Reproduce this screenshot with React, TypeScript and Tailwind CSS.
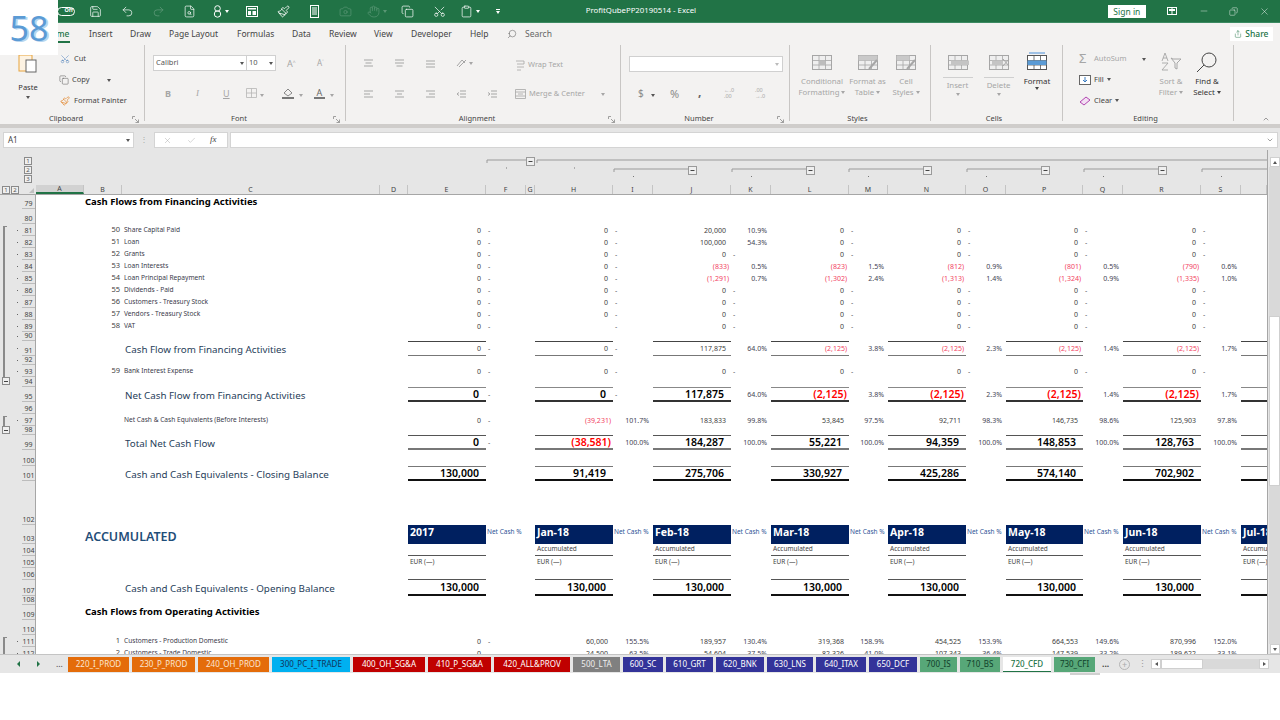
import React from "react";
import { Save, Undo2, Redo2, FileSearch, Paintbrush, Camera, Hand, Copy, Scissors, Clipboard, Search, ChevronUp, ChevronDown, Minus, X, Check, Share } from "lucide-react";

const COLS = "grid grid-cols-[48px_38px_258px_28px_78px_40px_9px_78px_40px_78px_40px_78px_39px_78px_40px_77px_40px_78px_40px_26px]";

type Rule = "none" | "thin" | "heavy" | "double" | "close" | "bottomThin" | "bottomHeavy";
const ruleClass: Record<Rule, string> = {
  none: "",
  thin: "border-t border-b border-t-[#444] border-b-[#777]",
  heavy: "border-t border-b-2 border-t-[#888] border-b-[#333]",
  double: "border-t border-b-2 border-t-[#555] border-b-[#777]",
  close: "border-t border-b-2 border-t-[#777] border-b-[#111]",
  bottomThin: "border-b border-b-[#555]",
  bottomHeavy: "border-b-2 border-b-[#111]",
};

type RowDef = {
  n: number;
  h: number;
  g?: "start" | "line" | "box";
  dot?: boolean;
  num?: string;
  label?: string;
  kind?: "small" | "big" | "title" | "tiny" | "accum";
  vals?: [string, string][];
  size?: "sm" | "lg";
  rule?: Rule;
  head?: "months" | "acc" | "eur";
};

const z: [string, string] = ["0", "-"];
const zeros = (): [string, string][] => [z, z, z, z, z, z, z];
const MONTHS = ["2017", "Jan-18", "Feb-18", "Mar-18", "Apr-18", "May-18", "Jun-18"];

const rows: RowDef[] = [
  { n: 79, h: 14, kind: "title", label: "Cash Flows from Financing Activities" },
  { n: 80, h: 15 },
  { n: 81, h: 12, g: "start", dot: true, num: "50", label: "Share Capital Paid", vals: [z, z, ["20,000", "10.9%"], z, z, z, z] },
  { n: 82, h: 12, g: "line", dot: true, num: "51", label: "Loan", vals: [z, z, ["100,000", "54.3%"], z, z, z, z] },
  { n: 83, h: 12, g: "line", dot: true, num: "52", label: "Grants", vals: zeros() },
  { n: 84, h: 12, g: "line", dot: true, num: "53", label: "Loan Interests", vals: [z, z, ["(833)", "0.5%"], ["(823)", "1.5%"], ["(812)", "0.9%"], ["(801)", "0.5%"], ["(790)", "0.6%"]] },
  { n: 85, h: 12, g: "line", dot: true, num: "54", label: "Loan Principal Repayment", vals: [z, z, ["(1,291)", "0.7%"], ["(1,302)", "2.4%"], ["(1,313)", "1.4%"], ["(1,324)", "0.9%"], ["(1,335)", "1.0%"]] },
  { n: 86, h: 12, g: "line", dot: true, num: "55", label: "Dividends - Paid", vals: zeros() },
  { n: 87, h: 12, g: "line", dot: true, num: "56", label: "Customers - Treasury Stock", vals: zeros() },
  { n: 88, h: 12, g: "line", dot: true, num: "57", label: "Vendors - Treasury Stock", vals: zeros() },
  { n: 89, h: 12, g: "line", dot: true, num: "58", label: "VAT", vals: [z, ["", "-"], z, z, z, z, z] },
  { n: 90, h: 9, g: "line", dot: true },
  { n: 91, h: 15, g: "line", dot: true, kind: "big", label: "Cash Flow from Financing Activities", rule: "thin", vals: [z, z, ["117,875", "64.0%"], ["(2,125)", "3.8%"], ["(2,125)", "2.3%"], ["(2,125)", "1.4%"], ["(2,125)", "1.7%"]] },
  { n: 92, h: 9, g: "line", dot: true },
  { n: 93, h: 12, g: "line", dot: true, num: "59", label: "Bank Interest Expense", kind: "tiny", vals: zeros() },
  { n: 94, h: 10, g: "box" },
  { n: 95, h: 15, kind: "big", label: "Net Cash Flow from Financing Activities", size: "lg", rule: "heavy", vals: [z, z, ["117,875", "64.0%"], ["(2,125)", "3.8%"], ["(2,125)", "2.3%"], ["(2,125)", "1.4%"], ["(2,125)", "1.7%"]] },
  { n: 96, h: 12 },
  { n: 97, h: 12, g: "start", dot: true, kind: "tiny", label: "Net Cash & Cash Equivalents (Before Interests)", vals: [z, ["(39,231)", "101.7%"], ["183,833", "99.8%"], ["53,845", "97.5%"], ["92,711", "98.3%"], ["146,735", "98.6%"], ["125,903", "97.8%"]] },
  { n: 98, h: 9, g: "box" },
  { n: 99, h: 15, kind: "big", label: "Total Net Cash Flow", size: "lg", rule: "double", vals: [z, ["(38,581)", "100.0%"], ["184,287", "100.0%"], ["55,221", "100.0%"], ["94,359", "100.0%"], ["148,853", "100.0%"], ["128,763", "100.0%"]] },
  { n: 100, h: 16 },
  { n: 101, h: 15, kind: "big", label: "Cash and Cash Equivalents - Closing Balance", size: "lg", rule: "close", vals: [["130,000", ""], ["91,419", ""], ["275,706", ""], ["330,927", ""], ["425,286", ""], ["574,140", ""], ["702,902", ""]] },
  { n: 102, h: 44 },
  { n: 103, h: 19, kind: "accum", label: "ACCUMULATED", head: "months" },
  { n: 104, h: 12, head: "acc" },
  { n: 105, h: 12, head: "eur" },
  { n: 106, h: 12, rule: "bottomThin", vals: [["", ""], ["", ""], ["", ""], ["", ""], ["", ""], ["", ""], ["", ""]] },
  { n: 107, h: 16, kind: "big", label: "Cash and Cash Equivalents - Opening Balance", size: "lg", rule: "bottomHeavy", vals: [["130,000", ""], ["130,000", ""], ["130,000", ""], ["130,000", ""], ["130,000", ""], ["130,000", ""], ["130,000", ""]] },
  { n: 108, h: 9 },
  { n: 109, h: 15, kind: "title", label: "Cash Flows from Operating Activities" },
  { n: 110, h: 15 },
  { n: 111, h: 12, g: "start", dot: true, num: "1", label: "Customers - Production Domestic", vals: [z, ["60,000", "155.5%"], ["189,957", "130.4%"], ["319,368", "158.9%"], ["454,525", "153.9%"], ["664,553", "149.6%"], ["870,996", "152.0%"]] },
  { n: 112, h: 12, g: "line", dot: true, num: "2", label: "Customers - Trade Domestic", vals: [z, ["24,500", "63.5%"], ["54,604", "37.5%"], ["82,326", "41.0%"], ["107,343", "36.4%"], ["147,539", "33.2%"], ["189,622", "33.1%"]] },
];

function Gutter({ r }: { r: RowDef }) {
  return (
    <div className="flex w-[36px] shrink-0 bg-[#e6e6e6] border-r border-[#a6a6a6]">
      <div className="w-[12px]">
        {r.g === "start" && <div className="mt-[2px] ml-[3px] w-[4px] h-[calc(100%-2px)] border-l-2 border-t border-[#8a8a8a]" />}
        {r.g === "line" && <div className="ml-[3px] h-full border-l-2 border-[#8a8a8a]" />}
        {r.g === "box" && (
          <div className="ml-[2px] w-[8px] h-[8px] border border-[#8a8a8a] bg-[#efefef] flex items-center justify-center">
            <div className="w-[4px] h-px bg-[#444]" />
          </div>
        )}
      </div>
      <div className="w-[10px] flex items-center justify-center">
        {r.dot && <div className="w-px h-px bg-[#666]" />}
      </div>
      <div className="w-[13px] border-b border-[#bcbcbc] flex items-end justify-center text-[7px] leading-[9px] text-[#444]">{r.n}</div>
    </div>
  );
}

function Val({ v, size, rule }: { v: string; size?: "sm" | "lg"; rule: Rule }) {
  const neg = v.startsWith("(");
  const lg = size === "lg";
  return (
    <div
      className={`flex items-center justify-end whitespace-nowrap ${ruleClass[rule]} ${lg ? "text-[10.5px] font-semibold leading-none" : "text-[7px] leading-none"} ${lg ? (neg ? "pr-[2px]" : "pr-[7px]") : neg ? "pr-[2px]" : "pr-[5px]"} ${neg ? (lg ? "text-[#ff0000]" : "text-[#f2435f]") : lg ? "text-black" : "text-[#404040]"}`}
    >
      {v}
    </div>
  );
}

function Pct({ p }: { p: string }) {
  if (p === "-") return <div className="flex items-center pl-[2px] text-[7px] leading-none text-[#555]">-</div>;
  return <div className="flex items-center justify-end pr-[4px] text-[7px] leading-none text-[#444454]">{p}</div>;
}

function DataCells({ r }: { r: RowDef }) {
  const rule = r.rule ?? "none";
  const out: React.ReactNode[] = [];
  (r.vals ?? []).forEach((pair, i) => {
    out.push(<Val key={`v${i}`} v={pair[0]} size={r.size} rule={rule} />);
    out.push(<Pct key={`p${i}`} p={pair[1]} />);
    if (i === 0) out.push(<div key="g" />);
  });
  if (r.vals) out.push(<div key="t" className={ruleClass[rule]} />);
  return <>{out}</>;
}

function MonthCells() {
  const out: React.ReactNode[] = [];
  MONTHS.forEach((m, i) => {
    out.push(<div key={`m${i}`} className="bg-[#002060] text-white text-[10.5px] font-bold flex items-start pl-[2px] pt-[1px] leading-[13px]">{m}</div>);
    out.push(<div key={`n${i}`} className="pl-px pt-[2px] text-[6.5px] leading-[9px] text-[#2f5597] whitespace-nowrap">Net Cash %</div>);
    if (i === 0) out.push(<div key="g" />);
  });
  out.push(<div key="t" className="bg-[#002060] text-white text-[10.5px] font-bold pl-[2px] pt-[1px] leading-[13px] overflow-hidden whitespace-nowrap">Jul-18</div>);
  return <>{out}</>;
}

function TextCells({ text, line }: { text?: string; line?: boolean }) {
  const out: React.ReactNode[] = [];
  const cell = (k: string, t?: string) => (
    <div key={k} className={`flex items-center pl-[2px] text-[6.5px] leading-none text-[#444] overflow-hidden whitespace-nowrap ${line ? "border-b border-[#555]" : ""}`}>{t}</div>
  );
  for (let i = 0; i < 7; i++) {
    out.push(cell(`c${i}`, i === 0 && line ? undefined : text));
    out.push(<div key={`e${i}`} />);
    if (i === 0) out.push(<div key="g" />);
  }
  out.push(cell("t", text));
  return <>{out}</>;
}

function SheetRow({ r }: { r: RowDef }) {
  const big = r.kind === "big";
  return (
    <div className="flex shrink-0" style={{ height: r.h }}>
      <Gutter r={r} />
      <div className={`${COLS} w-[1231px] bg-white`}>
        <div />
        {r.kind === "title" ? (
          <div className="col-span-2 flex items-center pl-[1px] text-[9.5px] font-bold text-black whitespace-nowrap">{r.label}</div>
        ) : r.kind === "accum" ? (
          <div className="col-span-2 flex items-center pl-[2px] pt-[3px] text-[12.5px] font-semibold text-[#1f4e79] border-b border-[#9dc3e6] -ml-px whitespace-nowrap">{r.label}</div>
        ) : (
          <>
            <div className="flex items-center justify-end pr-[2px] text-[7.5px] leading-none text-[#444]">{r.num}</div>
            <div className={`flex items-center whitespace-nowrap ${big ? "pl-[3px] pt-[2px] leading-none text-[9.8px] text-[#27405a]" : "pl-[2px] text-[6.6px] text-[#3a3a4a]"}`}>{r.label}</div>
          </>
        )}
        <div />
        {r.head === "months" && <MonthCells />}
        {r.head === "acc" && <TextCells text="Accumulated" line />}
        {r.head === "eur" && <TextCells text="EUR (—)" />}
        <DataCells r={r} />
      </div>
    </div>
  );
}

function OutlineBars() {
  const segs = [614, 732, 849, 967, 1084];
  const stroke = "#9a9a9a";
  return (
    <svg width={1231} height={35} viewBox="36 150 1231 35" className="block">
      <path d="M487 163V160H526M537 163V160H1267" fill="none" stroke={stroke} strokeWidth={1} />
      <rect x={526.5} y={157.5} width={8} height={8} fill="#efefef" stroke={stroke} />
      <path d="M528.5 161.5H532.5" stroke="#444" />
      <rect x={506} y={167.5} width={1} height={1} fill="#777" />
      <rect x={574} y={167.5} width={1} height={1} fill="#777" />
      {segs.map((s) => (
        <g key={s}>
          <path d={`M${s} 172V169H${s + 74}`} fill="none" stroke={stroke} />
          <rect x={s + 74.5} y={166.5} width={8} height={8} fill="#efefef" stroke={stroke} />
          <path d={`M${s + 76.5} 170.5H${s + 80.5}`} stroke="#444" />
          <rect x={s + 19} y={176} width={1} height={1} fill="#777" />
        </g>
      ))}
      <path d="M1202 172V169H1267" fill="none" stroke={stroke} />
      <rect x={1221} y={176} width={1} height={1} fill="#777" />
    </svg>
  );
}

function Lvl({ t }: { t: string }) {
  return <div className="w-[8px] h-[8px] border border-[#8a8a8a] bg-[#efefef] text-[6px] leading-[7px] text-center text-[#555]">{t}</div>;
}

function ColHeader() {
  const letters = "ABCDEFGHIJKLMNOPQRS".split("").concat("");
  return (
    <div className="flex h-[10px] shrink-0">
      <div className="w-[36px] flex items-center bg-[#e6e6e6] border-b border-[#a6a6a6] pl-[2px] gap-px">
        <Lvl t="1" />
        <Lvl t="2" />
        <div className="ml-[9px] mt-[2px] w-0 h-0 border-l-[5px] border-l-transparent border-b-[5px] border-b-[#c0c0c0]" />
      </div>
      <div className={`${COLS} w-[1231px] bg-[#e6e6e6] border-b border-[#a6a6a6]`}>
        {letters.map((l, i) => (
          <div key={i} className={`flex items-center justify-center text-[7px] leading-none text-[#444] border-r border-[#c4c4c4] ${i === 0 ? "bg-[#d2d2d2] border-b-2 border-b-[#217346]" : ""}`}>{l}</div>
        ))}
      </div>
    </div>
  );
}

function Caret({ c = "#555" }: { c?: string }) {
  return <span className="inline-block w-0 h-0 border-x-[2.5px] border-x-transparent border-t-[3px]" style={{ borderTopColor: c }} />;
}

function Launcher() {
  return (
    <svg width={7} height={7} viewBox="0 0 7 7" className="block">
      <path d="M.5 3V.5H3M6.5 6.5L3 3M6.5 3.5V6.5H3.5" fill="none" stroke="#8a8a8a" strokeWidth={0.8} />
    </svg>
  );
}

function Group({ w, label, children, launcher }: { w: string; label: string; children: React.ReactNode; launcher?: boolean }) {
  return (
    <div className={`${w} h-[76px] shrink-0 flex flex-col border-r border-[#c8c6c4]`}>
      <div className="flex-1 flex min-h-0">{children}</div>
      <div className="h-[4px] flex items-center pr-[5px]">
        <span className="flex-1 text-center text-[7.5px] leading-none text-[#444]">{label}</span>
        {launcher && <Launcher />}
      </div>
    </div>
  );
}

function GridIcon({ kind, dim = true }: { kind: "cf" | "table" | "cell" | "ins" | "del" | "fmt"; dim?: boolean }) {
  const c = dim ? "#a6a6a6" : "#555";
  return (
    <svg width={22} height={20} viewBox="0 0 22 20" className="block">
      <rect x={1.5} y={3.5} width={19} height={14} fill={dim ? "#efefef" : "#fff"} stroke={c} />
      <path d="M1.5 8.5H20.5M1.5 13H20.5M8 3.5V17.5M14.5 3.5V17.5" stroke={c} strokeWidth={0.8} />
      {kind === "cf" && <rect x={8} y={8.5} width={6.5} height={4.5} fill="#bdbdbd" />}
      {kind === "table" && <><rect x={1.5} y={3.5} width={19} height={5} fill="#c9c9c9" /><path d="M20 8l-8 9" stroke="#a6a6a6" strokeWidth={2} /></>}
      {kind === "cell" && <><rect x={1.5} y={3.5} width={13} height={5} fill="#c9c9c9" /><path d="M20 8l-8 9" stroke="#a6a6a6" strokeWidth={2} /></>}
      {kind === "ins" && <rect x={4} y={8.5} width={18} height={4.5} fill="#c4c4c4" />}
      {kind === "del" && <><rect x={4} y={8.5} width={11} height={4.5} fill="#c4c4c4" /><path d="M15 7l6 7M21 7l-6 7" stroke="#a6a6a6" /></>}
      {kind === "fmt" && <><rect x={1.5} y={8.5} width={19} height={4.5} fill="#5b9bd5" /><path d="M3 1H19" stroke="#4a90d9" /></>}
    </svg>
  );
}

function Lines({ kind }: { kind: number }) {
  const paths: Record<number, string> = {
    0: "M1 2H10M2.5 5H8.5M1 8H10",
    1: "M1 2H10M1 5H10M2.5 8H8.5",
    2: "M1 3H10M1 6H10M1 9H10",
    3: "M1 2H10M1 5H7M1 8H10",
    4: "M1 2H10M3 5H8M1 8H10",
    5: "M1 2H10M4 5H10M1 8H10",
    6: "M4 2H10M4 5H10M4 8H10M1 3.5L3 5L1 6.5",
    7: "M4 2H10M4 5H10M4 8H10M3 3.5L1 5L3 6.5",
  };
  return (
    <svg width={11} height={10} viewBox="0 0 11 10" className="block">
      <path d={paths[kind]} stroke="#9d9d9d" strokeWidth={0.9} fill="none" />
    </svg>
  );
}

function BigBtn({ w, icon, l1, l2, dim = true, cap = false }: { w: string; icon: React.ReactNode; l1: string; l2?: string; dim?: boolean; cap?: boolean }) {
  return (
    <div className={`${w} flex flex-col items-center pt-[7px] text-[7.8px] leading-[11px] ${dim ? "text-[#a6a6a6]" : "text-[#333]"}`}>
      <div className="h-[20px] flex items-center justify-center">{icon}</div>
      <div className="mt-[4px] whitespace-nowrap">{l1}</div>
      <div className="whitespace-nowrap flex items-center gap-[2px]">
        {l2}
        {cap && <Caret c={dim ? "#a6a6a6" : "#444"} />}
      </div>
    </div>
  );
}

function SplitBtn({ w, kind, label }: { w: string; kind: "ins" | "del"; label: string }) {
  return (
    <div className={`${w} flex flex-col items-center pt-[7px] text-[7.8px] leading-[11px] text-[#a6a6a6]`}>
      <div className="h-[20px] flex items-center justify-center"><GridIcon kind={kind} /></div>
      <div className="w-[30px] border-t border-[#cfcfcf] mt-[5px] pt-[2px] text-center">{label}</div>
      <div className="mt-[2px] flex justify-center"><Caret c="#a6a6a6" /></div>
    </div>
  );
}

const QA = "w-[31.2px] h-full flex items-center justify-center gap-[3px] shrink-0";

function TitleBar() {
  return (
    <div className="h-[23px] shrink-0 bg-[#217346] border-b border-[#3c8a62] flex items-center text-white">
      <div className="ml-[57px] w-[18px] h-[9px] rounded-full border border-white flex items-center justify-end pr-[1px] text-[5.5px] font-bold leading-none">Off</div>
      <div className="ml-[5.4px] flex h-full items-center">
        <div className={QA}><Save size={13} strokeWidth={1.3} /></div>
        <div className={QA}><Undo2 size={13} strokeWidth={1.3} /></div>
        <div className={`${QA} opacity-30`}><Redo2 size={13} strokeWidth={1.3} /></div>
        <div className={QA}><FileSearch size={13} strokeWidth={1.3} /></div>
        <div className={QA}>
          <svg width={9} height={13} viewBox="0 0 9 13"><circle cx={4.5} cy={3.5} r={2.8} fill="none" stroke="#fff" /><circle cx={4.5} cy={9} r={3.2} fill="none" stroke="#fff" /></svg>
          <Caret c="#fff" />
        </div>
        <div className={QA}>
          <svg width={12} height={11} viewBox="0 0 12 11"><rect x={.5} y={.5} width={11} height={10} fill="none" stroke="#fff" /><rect x={2} y={2} width={8} height={1.5} fill="#fff" /><rect x={2} y={5} width={3} height={4} fill="#fff" /><rect x={6.5} y={5} width={3.5} height={4} fill="#fff" /></svg>
        </div>
        <div className={QA}><Paintbrush size={13} strokeWidth={1.5} /></div>
        <div className={QA}>
          <svg width={9} height={13} viewBox="0 0 9 13"><rect x={.5} y={.5} width={8} height={12} fill="none" stroke="#fff" /><path d="M2 3H7M2 5H7M2 7H7M2 9H7" stroke="#fff" /></svg>
        </div>
        <div className={`${QA} opacity-25`}><Camera size={13} strokeWidth={1.3} /></div>
        <div className={`${QA} opacity-25`}><Hand size={13} strokeWidth={1.3} /><Caret c="#fff" /></div>
        <div className={QA}><Copy size={13} strokeWidth={1.3} /></div>
        <div className={QA}><Scissors size={13} strokeWidth={1.3} className="-rotate-90" /></div>
        <div className={QA}><Clipboard size={13} strokeWidth={1.3} /><Caret c="#fff" /></div>
        <div className="w-[24px] h-full flex flex-col items-center justify-center gap-px">
          <div className="w-[4px] h-px bg-white" />
          <Caret c="#fff" />
        </div>
      </div>
      <div className="ml-[76px] w-[125px] text-[7.8px] whitespace-nowrap">ProfitQubePP20190514 - Excel</div>
      <div className="ml-[397px] w-[38px] h-[13px] bg-white text-[#217346] text-[8.5px] leading-[13px] text-center">Sign in</div>
      <div className="ml-[20px] w-[12px] flex justify-center">
        <svg width={10} height={8} viewBox="0 0 10 8"><rect x={.5} y={.5} width={9} height={7} fill="none" stroke="#fff" /><path d="M5 .5V7.5" stroke="#fff" /><rect x={2} y={2} width={6} height={2} fill="#fff" /></svg>
      </div>
      <div className="ml-[20px] w-[12px] flex justify-center"><Minus size={10} strokeWidth={1} /></div>
      <div className="ml-[18px] w-[12px] flex justify-center"><Copy size={9} strokeWidth={1.2} className="-scale-x-100" /></div>
      <div className="ml-[19px] w-[12px] flex justify-center"><X size={11} strokeWidth={1} /></div>
    </div>
  );
}

function TabRow() {
  const tabs: [string, string][] = [
    ["Insert", "w-[41px]"], ["Draw", "w-[39px]"], ["Page Layout", "w-[68px]"], ["Formulas", "w-[55px]"],
    ["Data", "w-[37px]"], ["Review", "w-[45px]"], ["View", "w-[37px]"], ["Developer", "w-[59px]"], ["Help", "w-[37px]"],
  ];
  return (
    <div className="h-[22px] shrink-0 bg-[#f3f2f1] flex items-center text-[8.5px] text-[#444]">
      <div className="ml-[44px] w-[45px] h-full flex items-center">
        <span className="text-[#217346] border-b-2 border-[#217346] pt-[3px] pb-px leading-[12px] px-px font-medium">Home</span>
      </div>
      {tabs.map(([t, w]) => <div key={t} className={`${w} whitespace-nowrap`}>{t}</div>)}
      <Search size={10} strokeWidth={1.2} className="-scale-x-100 text-[#555]" />
      <div className="ml-[8px] text-[#666]">Search</div>
      <div className="ml-[678px] w-[43px] h-[14px] bg-white flex items-center justify-center gap-[3px] text-[#217346] text-[8.5px] font-medium">
        <Share size={8} strokeWidth={1.4} />Share
      </div>
    </div>
  );
}

function Ribbon() {
  const txt = "text-[7.5px] leading-none";
  return (
    <div className="h-[79px] shrink-0 bg-[#f3f2f1] flex items-start">
      <Group w="w-[145px]" label="Clipboard" launcher>
        <div className="w-[56px] flex flex-col items-center pt-[8px]">
          <svg width={20} height={20} viewBox="0 0 20 20"><rect x={1} y={2} width={13} height={16} fill="#fdf3e3" stroke="#e8a33d" /><rect x={8} y={7} width={10} height={12} fill="#fff" stroke="#666" /></svg>
          <div className={`${txt} text-[#333] mt-[11px]`}>Paste</div>
          <div className="mt-[4px] flex"><Caret /></div>
        </div>
        <div className="flex flex-col pt-[3px] pl-[3px]">
          <div className={`h-[21px] flex items-center gap-[4px] pl-[1px] ${txt} text-[#444]`}><Scissors size={10} strokeWidth={1.2} className="-rotate-90 text-[#4a7ebb]" />Cut</div>
          <div className={`h-[21px] flex items-center gap-[3px] ${txt} text-[#444]`}><Copy size={10} strokeWidth={1.2} className="text-[#555]" />Copy<span className="ml-[14px]"><Caret /></span></div>
          <div className={`h-[21px] flex items-center gap-[4px] pl-[1px] ${txt} text-[#444]`}><Paintbrush size={10} strokeWidth={1.5} className="text-[#e07b1a]" />Format Painter</div>
        </div>
      </Group>
      <Group w="w-[201px]" label="Font" launcher>
        <div className="pl-[8px] pt-[10px] flex flex-col">
          <div className="flex items-center">
            <div className={`w-[94px] h-[16px] bg-white border border-[#d0d0d0] flex items-center justify-between px-[2px] ${txt} text-[#555]`}>Calibri<Caret /></div>
            <div className={`w-[29px] h-[16px] bg-white border border-l-0 border-[#d0d0d0] flex items-center justify-between px-[2px] ${txt} text-[#555]`}>10<Caret /></div>
            <div className="ml-[11px] w-[30px] text-[9px] text-[#a6a6a6] leading-none">A<sup className="text-[5px]">^</sup></div>
            <div className="text-[8px] text-[#a6a6a6] leading-none">A<sup className="text-[5px]">˅</sup></div>
          </div>
          <div className="flex items-center h-[14px] mt-[15px] text-[9px] text-[#a6a6a6] leading-none">
            <div className="ml-[12px] w-[31px] font-bold">B</div>
            <div className="w-[27px] italic [font-family:'Liberation_Serif',serif]">I</div>
            <div className="w-[23px] underline">U</div>
            <div className="w-[10px]"><svg width={11} height={10} viewBox="0 0 11 10"><path d="M.5.5H10.5V9.5H.5ZM.5 5H10.5M5.5.5V9.5" fill="none" stroke="#b5b5b5" strokeWidth={0.8} /></svg></div>
            <div className="ml-[4px] w-[22px]"><Caret c="#a6a6a6" /></div>
            <svg width={12} height={11} viewBox="0 0 12 11"><path d="M6 1L10 5L6 8L2 5Z" fill="none" stroke="#888" /><rect y={9} width={12} height={2} fill="#777" /></svg>
            <div className="ml-[5px] w-[15px]"><Caret c="#a6a6a6" /></div>
            <div className="flex flex-col items-center text-[#666] text-[9px]"><span>A</span><div className="w-[11px] h-[2px] bg-[#777]" /></div>
            <div className="ml-[5px]"><Caret c="#a6a6a6" /></div>
          </div>
        </div>
      </Group>
      <Group w="w-[275px]" label="Alignment" launcher>
        <div className="pl-[17px] pt-[12px] flex flex-col">
          <div className="flex items-center h-[12px] gap-[20px]">
            <Lines kind={0} /><Lines kind={1} /><Lines kind={2} />
            <div className="flex items-center gap-[2px]"><svg width={11} height={10} viewBox="0 0 11 10"><path d="M1 8L6 2L9 5M3 9L10 2" stroke="#a6a6a6" fill="none" /></svg><Caret c="#a6a6a6" /></div>
            <div className="flex items-center gap-[3px] ml-[22px] mt-[4px] text-[7.5px] text-[#a6a6a6]">
              <svg width={10} height={11} viewBox="0 0 10 11"><path d="M1 1H9V4H2M2 7H9M2 10H6" stroke="#a6a6a6" fill="none" strokeWidth={0.8} /></svg>Wrap Text
            </div>
          </div>
          <div className="flex items-center h-[12px] gap-[20px] mt-[19px]">
            <Lines kind={3} /><Lines kind={4} /><Lines kind={5} /><Lines kind={7} /><Lines kind={6} />
            <div className="-ml-[3px] flex items-center gap-[3px] text-[7.5px] text-[#a6a6a6] whitespace-nowrap">
              <svg width={11} height={10} viewBox="0 0 11 10"><path d="M.5.5H10.5V9.5H.5ZM.5 3H10.5M.5 7H10.5M3 5H8" fill="none" stroke="#a6a6a6" strokeWidth={0.8} /></svg>Merge &amp; Center
              <span className="ml-[13px]"><Caret c="#a6a6a6" /></span>
            </div>
          </div>
        </div>
      </Group>
      <Group w="w-[169px]" label="Number" launcher>
        <div className="pl-[8px] pt-[11px] flex flex-col">
          <div className="w-[154px] h-[16px] bg-white border border-[#d0d0d0] flex items-center justify-end pr-[3px]"><Caret c="#bbb" /></div>
          <div className="flex items-center h-[14px] mt-[14px] text-[#8a8a8a] text-[10px] leading-none">
            <div className="ml-[9px] w-[13px]">$</div>
            <div className="w-[19px]"><Caret /></div>
            <div className="w-[28px] text-[11px]">%</div>
            <div className="w-[26px] font-bold text-[12px] text-[#666] -mt-[3px]">,</div>
            <div className="w-[31px] flex flex-col text-[5.5px] leading-[6px] text-[#a6a6a6]"><span>←.0</span><span>.00</span></div>
            <div className="flex flex-col text-[5.5px] leading-[6px] text-[#a6a6a6]"><span>.00</span><span>→.0</span></div>
          </div>
        </div>
      </Group>
      <Group w="w-[141px]" label="Styles">
        <div className="flex pl-[7px]">
          <BigBtn w="w-[50px]" icon={<GridIcon kind="cf" />} l1="Conditional" l2="Formatting" cap />
          <BigBtn w="w-[41px]" icon={<GridIcon kind="table" />} l1="Format as" l2="Table" cap />
          <BigBtn w="w-[36px]" icon={<GridIcon kind="cell" />} l1="Cell" l2="Styles" cap />
        </div>
      </Group>
      <Group w="w-[132px]" label="Cells">
        <div className="flex pl-[6px]">
          <SplitBtn w="w-[41px]" kind="ins" label="Insert" />
          <SplitBtn w="w-[41px]" kind="del" label="Delete" />
          <BigBtn w="w-[36px]" icon={<GridIcon kind="fmt" dim={false} />} l1="Format" dim={false} cap />
        </div>
      </Group>
      <Group w="w-[171px]" label="Editing">
        <div className="flex pl-[16px]">
          <div className="w-[75px] flex flex-col pt-[3px]">
            <div className={`h-[21px] flex items-center gap-[3px] ${txt} text-[#a6a6a6]`}><span className="w-[12px] text-[13px] leading-none">Σ</span>AutoSum<span className="ml-[13px]"><Caret /></span></div>
            <div className={`h-[21px] flex items-center gap-[3px] ${txt} text-[#444]`}><svg width={12} height={10} viewBox="0 0 12 10"><rect x={.5} y={.5} width={11} height={9} fill="#fff" stroke="#666" /><path d="M6 2V7M4 5L6 7L8 5" stroke="#3a7cc2" fill="none" /></svg>Fill<Caret /></div>
            <div className={`h-[21px] flex items-center gap-[3px] ${txt} text-[#444]`}><svg width={12} height={10} viewBox="0 0 12 10"><path d="M1 6L7 1L11 4L5 9Z" fill="#f3dff3" stroke="#b146b1" /></svg>Clear<Caret /></div>
          </div>
          <BigBtn w="w-[34px]" icon={
            <svg width={22} height={20} viewBox="0 0 22 20"><path d="M11 6L13 7H21L17 11V17L15 16V11Z" fill="none" stroke="#a6a6a6" /><path d="M2 9L5 1L8 9M3 6H7M2 11H8L2 18H8" fill="none" stroke="#a6a6a6" strokeWidth={0.9} /></svg>
          } l1="Sort &" l2="Filter" cap />
          <BigBtn w="w-[38px]" icon={
            <svg width={22} height={21} viewBox="0 0 22 21"><circle cx={13} cy={8} r={7} fill="none" stroke="#444" /><path d="M8 13L1 20" stroke="#444" /></svg>
          } l1="Find &" l2="Select" dim={false} cap />
        </div>
      </Group>
      <div className="flex-1 h-[76px] flex items-end justify-end pr-[10px]"><ChevronUp size={8} className="text-[#444] translate-y-[2px]" strokeWidth={1.5} /></div>
    </div>
  );
}

function FormulaBar() {
  return (
    <div className="h-[26px] shrink-0 bg-[#e6e6e6] border-t-[4px] border-[#cfcdcb] pt-[4px] flex items-start pl-[3px] text-[8px] text-[#444]">
      <div className="w-[131px] h-[16px] bg-white border border-[#d4d4d4] flex items-center justify-between pl-[4px] pr-[3px]">A1<Caret /></div>
      <div className="w-[20px] text-center text-[#aaa] leading-[14px]">⋮</div>
      <div className="w-[74px] h-[16px] bg-white border border-[#d4d4d4] flex items-center pl-[8px]">
        <X size={9} className="text-[#a6a6a6]" strokeWidth={1.2} />
        <Check size={9} className="ml-[15px] text-[#a6a6a6]" strokeWidth={1.2} />
        <span className="ml-[14px] italic [font-family:'Liberation_Serif',serif] text-[9px]">fx</span>
      </div>
      <div className="ml-[2px] w-[1048px] h-[16px] bg-white border border-[#d4d4d4] flex items-center justify-end pr-[3px]"><ChevronDown size={8} strokeWidth={1.5} /></div>
    </div>
  );
}

function ScrollBtn({ dir }: { dir: "u" | "d" | "l" | "r" }) {
  const cls = {
    u: "border-x-[2.5px] border-x-transparent border-b-[3px] border-b-[#555]",
    d: "border-x-[2.5px] border-x-transparent border-t-[3px] border-t-[#555]",
    l: "border-y-[2.5px] border-y-transparent border-r-[3px] border-r-[#555]",
    r: "border-y-[2.5px] border-y-transparent border-l-[3px] border-l-[#555]",
  }[dir];
  return <div className="w-[10px] h-[10px] bg-white border border-[#d0d0d0] flex items-center justify-center shrink-0"><div className={`w-0 h-0 ${cls}`} /></div>;
}

const SHEETS: [string, string][] = [
  ["220_I_PROD", "w-[61px] bg-[#e46c0a] text-[#fbe6d4]"],
  ["230_P_PROD", "w-[63px] bg-[#e46c0a] text-[#fbe6d4]"],
  ["240_OH_PROD", "w-[71px] bg-[#e46c0a] text-[#fbe6d4]"],
  ["300_PC_I_TRADE", "w-[78px] bg-[#00b0f0] text-[#12345a]"],
  ["400_OH_SG&A", "w-[72px] bg-[#c00000] text-white"],
  ["410_P_SG&A", "w-[63px] bg-[#c00000] text-white"],
  ["420_ALL&PROV", "w-[76px] bg-[#c00000] text-white"],
  ["500_LTA", "w-[47px] bg-[#808080] text-[#eee]"],
  ["600_SC", "w-[40px] bg-[#333399] text-white"],
  ["610_GRT", "w-[47px] bg-[#333399] text-white"],
  ["620_BNK", "w-[48px] bg-[#333399] text-white"],
  ["630_LNS", "w-[46px] bg-[#333399] text-white"],
  ["640_ITAX", "w-[50px] bg-[#333399] text-white"],
  ["650_DCF", "w-[48px] bg-[#333399] text-white"],
  ["700_IS", "w-[37px] bg-[#57a778] text-[#10402a]"],
  ["710_BS", "w-[40px] bg-[#57a778] text-[#10402a]"],
  ["720_CFD", "w-[48px] bg-white text-[#217346] border-b border-[#217346] font-medium"],
  ["730_CFI", "w-[41px] bg-[#57a778] text-[#10402a]"],
];

function SheetTabs() {
  return (
    <div className="h-[19px] shrink-0 bg-[#e6e6e6] border-t border-[#c4c4c4] flex items-center text-[8.5px] text-[#444]">
      <div className="ml-[17px] w-0 h-0 border-y-[3px] border-y-transparent border-r-[3px] border-r-[#217346]" />
      <div className="ml-[17px] w-0 h-0 border-y-[3px] border-y-transparent border-l-[3px] border-l-[#217346]" />
      <div className="ml-[16px] w-[11px] leading-none">...</div>
      <div className="flex gap-[3px] ml-[1px] h-[15px]">
        {SHEETS.map(([t, c]) => (
          <div key={t} className={`${c} flex items-center justify-center whitespace-nowrap leading-none text-[8px]`}>{t}</div>
        ))}
      </div>
      <div className="ml-[7px] w-[11px] leading-none font-bold">...</div>
      <div className="ml-[6px] w-[11px] h-[11px] rounded-full border border-[#b5b5b5] flex items-center justify-center text-[9px] leading-none text-[#aaa]">+</div>
      <div className="ml-[8px] w-[4px] text-[#999] leading-none">⋮</div>
      <div className="ml-[9px] flex items-center w-[118px] h-[10px] bg-[#d9d9d9]">
        <ScrollBtn dir="l" />
        <div className="w-[42px] h-[10px] bg-white border border-[#cfcfcf]" />
        <div className="flex-1" />
        <ScrollBtn dir="r" />
      </div>
    </div>
  );
}

export default function App() {
  return (
    <div className="w-[1280px] h-[720px] overflow-hidden bg-white flex flex-col relative [font-family:'Noto_Sans',sans-serif]">
      <TitleBar />
      <TabRow />
      <Ribbon />
      <FormulaBar />
      <div className="h-[504px] shrink-0 flex">
        <div className="w-[1267px] flex flex-col">
          <div className="h-[35px] shrink-0 flex bg-[#e6e6e6]">
            <div className="w-[36px] flex flex-col items-end pr-[4px] pt-[7px] gap-px">
              <Lvl t="1" /><Lvl t="2" /><Lvl t="3" />
            </div>
            <OutlineBars />
          </div>
          <ColHeader />
          <div className="flex-1 min-h-0 overflow-hidden flex flex-col">
            {rows.map((r) => <SheetRow key={r.n} r={r} />)}
          </div>
        </div>
        <div className="w-[13px] flex flex-col items-end bg-[#e6e6e6] border-l border-[#a6a6a6] pt-[7px]">
          <ScrollBtn dir="u" />
          <div className="w-[11px] flex-1 bg-[#d9d9d9] flex flex-col pt-[149px]">
            <div className="h-[170px] bg-white border border-[#cfcfcf]" />
          </div>
          <ScrollBtn dir="d" />
        </div>
      </div>
      <SheetTabs />
      <div className="ml-[1070px] w-[30px] h-[2px] bg-[#d0d0d0]" />
      <div className="absolute top-0 left-0 w-[58px] h-[55px] bg-white flex items-center justify-center text-[34px] leading-none text-[#5b9bd5] [text-shadow:2px_1px_0_#b7d5ef]">58</div>
    </div>
  );
}
